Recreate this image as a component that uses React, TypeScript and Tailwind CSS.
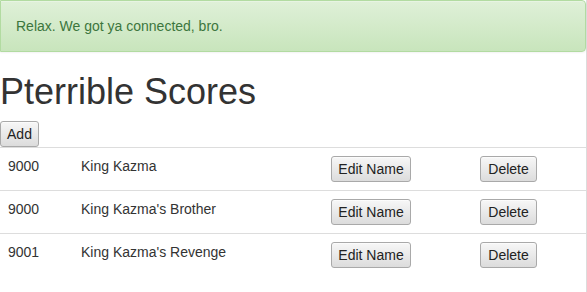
import React from "react";

const font = { fontFamily: '"Liberation Sans", Arial, Helvetica, sans-serif' };

function Btn({ children, w }: { children: React.ReactNode; w: string }) {
  return (
    <button className={`${w} h-[26px] px-0 border border-[#a9a9a9] rounded-[3px] bg-gradient-to-b from-[#f7f7f7] to-[#dcdcdc] text-[14px] leading-5 text-[#222] shadow-[inset_0_1px_0_rgba(255,255,255,0.6)]`}>
      {children}
    </button>
  );
}

const rows = [
  { score: "9000", name: "King Kazma" },
  { score: "9000", name: "King Kazma's Brother" },
  { score: "9001", name: "King Kazma's Revenge" },
];

export default function App() {
  return (
    <div className="w-[587px] h-[292px] bg-white overflow-hidden" style={font}>
      <div className="w-[587px] h-[292px] border-r border-[#dcdcdc] box-border">
        <div className="h-[52px] w-[586px] box-border border border-[#b2dba1] rounded-r-[4px] bg-gradient-to-b from-[#dff0d8] to-[#c8e5bc] text-[#3c763d] text-[14px] leading-5 px-[15px] py-[15px] shadow-[inset_0_1px_0_rgba(255,255,255,0.25),0_1px_2px_rgba(0,0,0,0.05)]">
          Relax. We got ya connected, bro.
        </div>
        <h1 className="mt-5 h-[39px] mb-[10px] text-[36px] leading-[39.6px] font-normal text-[#333]">
          Pterrible Scores
        </h1>
        <div className="h-[26px] flex">
          <Btn w="w-[39px]">Add</Btn>
        </div>
        <div className="w-[586px] text-[14px] leading-5 text-[#333]">
          {rows.map((r, i) => (
            <div key={i} className="flex border-t border-[#dddddd]">
              <div className="w-[73px] p-2">{r.score}</div>
              <div className="w-[250px] p-2">{r.name}</div>
              <div className="w-[149px] p-2 flex">
                <Btn w="w-[80px]">Edit Name</Btn>
              </div>
              <div className="flex-1 p-2 flex">
                <Btn w="w-[57px]">Delete</Btn>
              </div>
            </div>
          ))}
        </div>
      </div>
    </div>
  );
}
